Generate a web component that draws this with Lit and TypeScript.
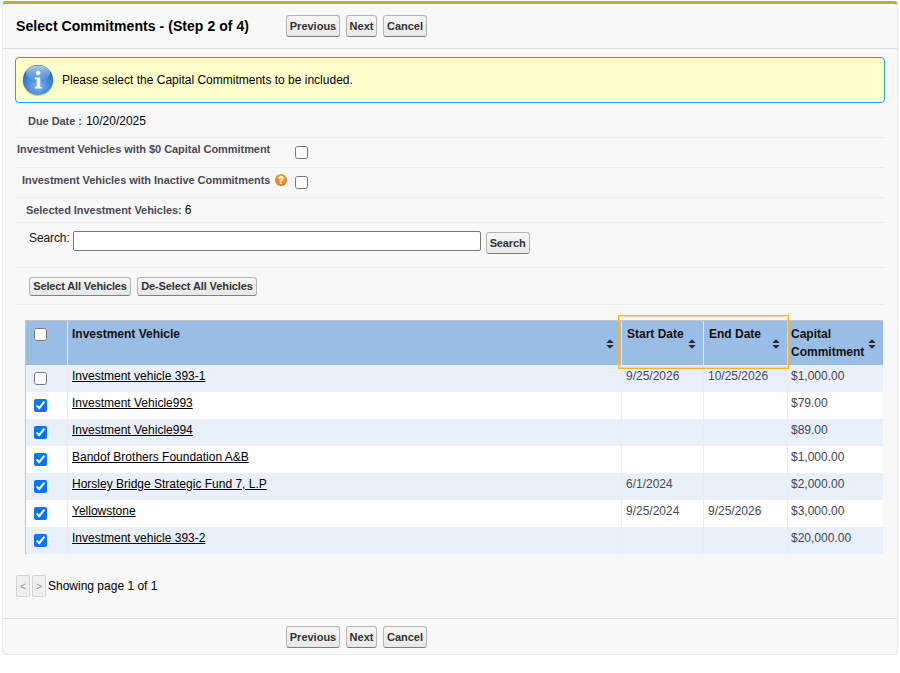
import { LitElement, html, css, svg } from "lit";
import { customElement } from "lit/decorators.js";

const rows = [
  { name: "Investment vehicle 393-1", start: "9/25/2026", end: "10/25/2026", amount: "$1,000.00", on: false },
  { name: "Investment Vehicle993", start: "", end: "", amount: "$79.00", on: true },
  { name: "Investment Vehicle994", start: "", end: "", amount: "$89.00", on: true },
  { name: "Bandof Brothers Foundation A&B", start: "", end: "", amount: "$1,000.00", on: true },
  { name: "Horsley Bridge Strategic Fund 7, L.P", start: "6/1/2024", end: "", amount: "$2,000.00", on: true },
  { name: "Yellowstone", start: "9/25/2024", end: "9/25/2026", amount: "$3,000.00", on: true },
  { name: "Investment vehicle 393-2", start: "", end: "", amount: "$20,000.00", on: true },
];

const sortIcon = svg`<svg class="sort" width="8" height="10" viewBox="0 0 8 10"><path d="M4 0.3 7.6 4.1H0.4Z M0.4 5.9H7.6L4 9.7Z" fill="#1f2a3a"/></svg>`;

@customElement("app-root")
export class AppRoot extends LitElement {
  static styles = css`
    :host { display: block; height: 673px; background: #fff; font-family: "Liberation Sans", Arial, sans-serif; font-size: 12px; color: #000; }
    * { box-sizing: border-box; }
    input[type="checkbox"] { width: 13px; height: 13px; margin: 0; flex: none; }
    .block { position: relative; margin: 1px 2px 0; height: 654px; background: #f8f8f8; border: 1px solid #eaeaea; border-top: 3px solid #b5b32c; border-radius: 4px; display: flex; flex-direction: column; }
    .head { height: 45px; flex: none; display: flex; align-items: center; border-bottom: 1px solid #dbdbdb; padding-left: 13px; }
    .title { width: 270px; margin: 0; font-size: 14px; font-weight: bold; color: #000; white-space: nowrap; letter-spacing: 0.06px; }
    .btns { display: flex; gap: 6px; }
    button { font-family: inherit; font-size: 11px; font-weight: bold; color: #333; height: 22px; padding: 0; border: 1px solid #b5b5b5; border-bottom-color: #7f7f7f; border-radius: 3px; background: linear-gradient(#f7f7f7, #eeeeee 50%, #e8e8e8); white-space: nowrap; }
    .bbtn { width: 54px; }
    .nbtn { width: 31px; }
    .cbtn { width: 44px; }
    .sbtn { width: 44px; letter-spacing: -0.12px; }
    .abtn { width: 102px; letter-spacing: -0.14px; }
    .dbtn { width: 120px; letter-spacing: -0.1px; }
    .body { flex: 1; padding: 8px 12px 0; min-height: 0; }
    .msg { height: 46px; display: flex; align-items: center; gap: 8px; padding-left: 6px; background: #ffc; border: 1px solid #39f; border-radius: 4px; }
    .msg svg { flex: none; }
    .row { display: flex; align-items: center; border-bottom: 1px solid #ececec; }
    .lbl { font-size: 11px; font-weight: bold; color: #4a4a56; white-space: nowrap; letter-spacing: -0.05px; }
    .due { height: 35px; padding: 1px 0 0 13px; gap: 4px; }
    .inv0 { height: 30px; padding-left: 2px; }
    .inv0 .lbl { width: 278px; margin-top: -8px; }
    .inv1 { height: 30px; padding-left: 7px; }
    .inv1 .lbl { margin-top: -5px; }
    .q { margin: -5px 0 0 5px; flex: none; }
    .inv1 input { margin-left: 8px; }
    .sel { height: 25px; padding-left: 11px; gap: 3px; }
    .search { height: 45px; align-items: flex-start; padding: 8px 0 0 14px; gap: 3px; }
    .search label { line-height: 14px; color: #111; letter-spacing: -0.1px; }
    .search .txt { width: 408px; height: 20px; border: 1px solid #767676; border-radius: 2px; background: #fff; padding: 0; }
    .search button { margin: 1px 0 0 2px; }
    .actions { height: 37px; padding-left: 14px; gap: 6px; }
    .actions button { height: 19px; }
    .tbl-wrap { position: relative; margin: 15px 2px 0 10px; }
    table { width: 858px; border-collapse: separate; border-spacing: 0; table-layout: fixed; border-left: 1px solid #c4c4c4; border-top: 1px solid #c4c4c4; }
    th { height: 44px; padding: 0; background: #9abde6; border-right: 1px solid #e3edf8; font-weight: bold; text-align: left; vertical-align: top; }
    th:last-child { border-right: 0; }
    .th { height: 44px; display: flex; justify-content: space-between; align-items: center; padding: 0 7px 0 4px; }
    .th span { align-self: flex-start; margin-top: 4px; line-height: 18px; color: #111; }
    .th.d { padding-left: 5px; }
    .th.cc { padding-left: 3px; }
    .sort { flex: none; margin-top: 1px; }
    th.cb { padding: 7px 0 0 8px; }
    td { height: 27px; padding: 4px 4px 0; vertical-align: top; line-height: 15px; color: #4a4a56; border-right: 1px solid #ececec; white-space: nowrap; }
    td:last-child { border-right: 0; }
    td.a { padding-left: 3px; color: #3f4658; }
    tbody tr:nth-child(odd) td { background: #e9f0f9; }
    tbody tr:nth-child(even) td { background: #fff; }
    td.cb { padding: 7px 0 0 8px; }
    td a { color: #000; text-decoration: underline; }
    .focus { position: absolute; left: 593px; top: -5px; width: 171px; height: 54px; border: 1px solid #fbb52f; box-shadow: inset 0 0 0 1px rgba(251, 181, 47, 0.5); pointer-events: none; }
    .pager { display: flex; align-items: center; margin: 21px 0 0 1px; height: 22px; }
    .pg { width: 14px; height: 22px; border: 1px solid #d4d4d4; border-radius: 2px; background: #efefef; color: #999; font-size: 11px; display: flex; align-items: center; justify-content: center; margin-right: 2px; }
    .foot { height: 36px; flex: none; display: flex; align-items: center; border-top: 1px solid #dbdbdb; padding-left: 283px; }
  `;

  private buttons() {
    return html`<div class="btns">
      <button class="bbtn">Previous</button><button class="nbtn">Next</button><button class="cbtn">Cancel</button>
    </div>`;
  }

  render() {
    return html`<div class="block">
      <div class="head"><h2 class="title">Select Commitments - (Step 2 of 4)</h2>${this.buttons()}</div>
      <div class="body">
        <div class="msg">
          <svg width="32" height="32" viewBox="0 0 32 32">
            <defs>
              <radialGradient id="ib" cx="50%" cy="70%" r="65%"><stop offset="0" stop-color="#7fb8f0"/><stop offset=".6" stop-color="#3f86d8"/><stop offset="1" stop-color="#2563b0"/></radialGradient>
              <linearGradient id="ih" x1="0" y1="0" x2="0" y2="1"><stop offset="0" stop-color="#cfe3f8" stop-opacity=".9"/><stop offset="1" stop-color="#7fb2ea" stop-opacity=".2"/></linearGradient>
            </defs>
            <circle cx="16" cy="16.5" r="15.5" fill="#8f9aa6" opacity=".55"/>
            <circle cx="16" cy="16" r="15" fill="url(#ib)"/>
            <ellipse cx="16" cy="9" rx="12" ry="7.5" fill="url(#ih)"/>
            <circle cx="16.2" cy="9" r="2.3" fill="#fff"/>
            <path d="M13 13.5h5.2v9.2H20v1.8h-7v-1.8h1.7v-7.4H13Z" fill="#fff"/>
          </svg>
          <span>Please select the Capital Commitments to be included.</span>
        </div>
        <div class="row due"><span class="lbl">Due Date :</span><span>10/20/2025</span></div>
        <div class="row inv0"><span class="lbl">Investment Vehicles with $0 Capital Commitment</span><input type="checkbox" /></div>
        <div class="row inv1">
          <span class="lbl">Investment Vehicles with Inactive Commitments</span>
          <svg class="q" width="12" height="12" viewBox="0 0 12 12">
            <defs><radialGradient id="qb" cx="50%" cy="35%" r="70%"><stop offset="0" stop-color="#f9b84a"/><stop offset="1" stop-color="#d96f0e"/></radialGradient></defs>
            <circle cx="6" cy="6" r="6" fill="url(#qb)"/>
            <text x="6" y="9.6" text-anchor="middle" font-family="Liberation Sans" font-weight="bold" font-size="10" fill="#fff">?</text>
          </svg>
          <input type="checkbox" />
        </div>
        <div class="row sel"><span class="lbl">Selected Investment Vehicles:</span><span>6</span></div>
        <div class="row search"><label>Search:</label><input class="txt" type="text" /><button class="sbtn">Search</button></div>
        <div class="row actions"><button class="abtn">Select All Vehicles</button><button class="dbtn">De-Select All Vehicles</button></div>
        <div class="tbl-wrap">
          <table>
            <colgroup><col style="width:42px" /><col style="width:554px" /><col style="width:82px" /><col style="width:84px" /><col style="width:95px" /></colgroup>
            <thead><tr>
              <th class="cb"><input type="checkbox" /></th>
              <th><div class="th"><span>Investment Vehicle</span>${sortIcon}</div></th>
              <th><div class="th d"><span>Start Date</span>${sortIcon}</div></th>
              <th><div class="th d"><span>End Date</span>${sortIcon}</div></th>
              <th><div class="th cc"><span>Capital<br />Commitment</span>${sortIcon}</div></th>
            </tr></thead>
            <tbody>
              ${rows.map((r) => html`<tr>
                <td class="cb"><input type="checkbox" .checked=${r.on} /></td>
                <td><a href="#">${r.name}</a></td>
                <td>${r.start}</td>
                <td>${r.end}</td>
                <td class="a">${r.amount}</td>
              </tr>`)}
            </tbody>
          </table>
          <div class="focus"></div>
        </div>
        <div class="pager"><div class="pg">&lt;</div><div class="pg">&gt;</div><span>Showing page 1 of 1</span></div>
      </div>
      <div class="foot">${this.buttons()}</div>
    </div>`;
  }
}
